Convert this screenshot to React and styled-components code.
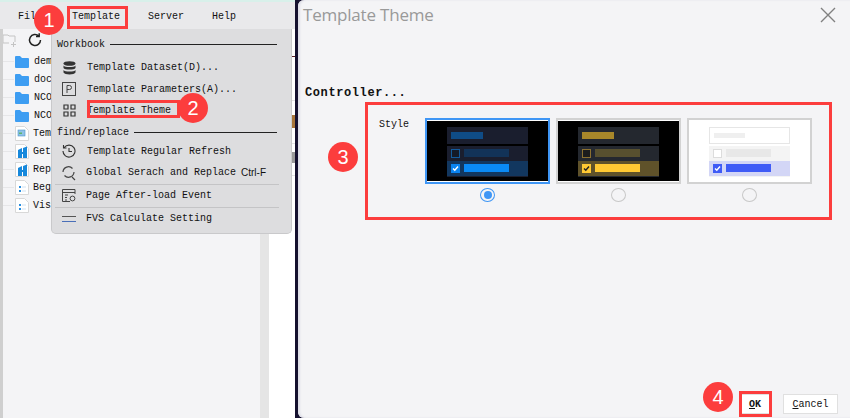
import React from 'react';
import styled, { createGlobalStyle } from 'styled-components';

const Global = createGlobalStyle`
	html, body {
		margin: 0;
		padding: 0;
		background: #f4f4f6;
	}
	#root {
		width: 850px;
		height: 418px;
	}
`;

const mono = `'Liberation Mono', 'DejaVu Sans Mono', monospace`;

const Page = styled.div`
	position: relative;
	display: flex;
	width: 850px;
	height: 418px;
	overflow: hidden;
	background: #14102e;
	font-family: ${mono};
	color: #111;
`;

const AppWindow = styled.div`
	position: relative;
	display: flex;
	flex-direction: column;
	width: 295px;
	flex: none;
	background: #f4f4f6;
	border-top: 2px solid #d8f0ea;
	box-sizing: border-box;
`;

const MenuBar = styled.div`
	display: flex;
	align-items: center;
	height: 27px;
	flex: none;
	padding: 2px 0 0 18px;
	box-sizing: border-box;
	background: #e9e9eb;
	font-size: 10px;
`;

const MenuLabel = styled.span`
	width: ${p => p.$w}px;
	flex: none;
`;

const AppBody = styled.div`
	display: flex;
	flex: 1;
	min-height: 0;
`;

const Tree = styled.div`
	width: 257px;
	margin-left: 3px;
	flex: none;
	background: #f4f4f6;
	box-shadow: -3px 0 0 #cfcfcf;
`;

const ToolRow = styled.div`
	display: flex;
	align-items: center;
	gap: 12px;
	height: 23px;
	padding-bottom: 1px;
	box-sizing: border-box;
`;

const TreeRow = styled.div`
	display: flex;
	align-items: center;
	gap: ${p => p.$gap || 5}px;
	height: 18px;
	padding-left: 12px;
	font-size: 10px;
	background: linear-gradient(#e6e6e8, #e6e6e8) no-repeat 0 50% / 11px 1px;
`;

const ScrollTrack = styled.div`
	width: 9px;
	flex: none;
	background: #e5e5e5;
`;

const WhitePane = styled.div`
	flex: 1;
	display: flex;
	flex-direction: column;
	align-items: flex-end;
	background: #fff;
`;

const PeekMark = styled.span`
	display: block;
	width: 4px;
	height: ${p => p.$h}px;
	margin-top: ${p => p.$mt}px;
	background: ${p => p.$bg};
`;

const Divider = styled.div`
	width: 3px;
	flex: none;
`;

const Dialog = styled.div`
	flex: 1;
	display: flex;
	flex-direction: column;
	background: #f4f4f6;
	border-radius: 6px 0 0 6px;
	box-shadow: inset 2px 0 2px #dddde6;
`;

const TitleBar = styled.div`
	display: flex;
	align-items: center;
	justify-content: space-between;
	height: 29px;
	flex: none;
	padding: 0 14px 0 5px;
`;

const Title = styled.h1`
	margin: 0;
	font: 400 17px 'Open Sans', sans-serif;
	letter-spacing: -0.2px;
	color: #999;
`;

const Heading = styled.div`
	margin: 56px 0 0 7px;
	font-size: 12px;
	font-weight: 700;
	letter-spacing: 0.6px;
	line-height: 16px;
`;

const StylePanel = styled.div`
	display: flex;
	margin: 2px 0 0 81px;
	height: 99px;
`;

const StyleLabel = styled.div`
	width: 46px;
	padding-top: 14px;
	font-size: 10px;
	line-height: 16px;
`;

const Options = styled.div`
	display: flex;
	gap: 6px;
	padding-top: 15px;
`;

const Option = styled.div`
	display: flex;
	flex-direction: column;
	align-items: center;
	gap: 2px;
	width: 125px;
`;

const Thumb = styled.div`
	display: flex;
	flex-direction: column;
	justify-content: center;
	align-items: center;
	width: 125px;
	height: 70px;
	padding-top: 2px;
	box-sizing: border-box;
	border: 2px solid ${p => p.$border};
	background: ${p => p.$bg};
	box-shadow: inset 0 1px 0 #fff, inset 0 -1px 0 #fff;
`;

const Radio = styled.span`
	display: flex;
	align-items: center;
	justify-content: center;
	width: 15px;
	height: 15px;
	margin-top: 2px;
	box-sizing: border-box;
	border-radius: 50%;
	border: 1px solid ${p => (p.$on ? '#3f96f5' : '#c8c8c8')};
	&::after {
		content: '';
		display: ${p => (p.$on ? 'block' : 'none')};
		width: 8px;
		height: 8px;
		border-radius: 50%;
		background: #3f96f5;
	}
`;

const MiniHead = styled.div`
	display: flex;
	align-items: center;
	box-sizing: border-box;
	width: 81px;
	height: 17px;
	padding-left: 4px;
	background: ${p => p.$bg};
	border: ${p => p.$line || 'none'};
`;

const MiniList = styled.div`
	width: 81px;
	margin-top: 2px;
	padding-bottom: 1px;
	background: ${p => p.$bg};
`;

const MiniRow = styled.div`
	display: flex;
	align-items: center;
	gap: 4px;
	height: 15px;
	padding-left: 4px;
	background: ${p => p.$bg || 'transparent'};
`;

const MiniBar = styled.span`
	display: block;
	width: ${p => p.$w}px;
	height: ${p => p.$h || 8}px;
	background: ${p => p.$bg};
`;

const MiniCheck = styled.span`
	display: flex;
	align-items: center;
	justify-content: center;
	box-sizing: border-box;
	width: 9px;
	height: 9px;
	background: ${p => p.$bg};
	border: 1px solid ${p => p.$border};
`;

const Footer = styled.div`
	display: flex;
	justify-content: flex-end;
	align-items: center;
	gap: 12px;
	margin-top: auto;
	padding: 0 12px 4px 0;
`;

const Button = styled.button`
	width: ${p => p.$w}px;
	height: 20px;
	padding: 0;
	box-sizing: border-box;
	background: #fff;
	border: 1px solid #e0e0e0;
	font: 10px ${mono};
	font-weight: ${p => (p.$bold ? 700 : 400)};
	color: #111;
	u {
		text-underline-offset: 1px;
	}
`;

const Menu = styled.div`
	position: absolute;
	left: 51px;
	top: 27px;
	width: 241px;
	height: 205px;
	box-sizing: border-box;
	padding-top: 8px;
	background: #dddddf;
	border: 1px solid #c9c9cb;
	border-top: 0;
	border-radius: 0 0 5px 5px;
	font-size: 10px;
	z-index: 2;
`;

const GroupTitle = styled.div`
	display: flex;
	align-items: center;
	gap: 5px;
	height: 14px;
	padding: 0 14px 0 5px;
	margin: ${p => p.$mt || 0}px 0 ${p => p.$mb || 0}px;
	&::after {
		content: '';
		flex: 1;
		height: 1px;
		background: #222;
	}
`;

const MenuItem = styled.div`
	display: flex;
	align-items: center;
	height: ${p => p.$h || 21.5}px;
	padding-left: 7px;
`;

const ItemIcon = styled.span`
	display: flex;
	justify-content: center;
	width: 20px;
	margin-right: ${p => p.$mr || 8}px;
	flex: none;
`;

const Shortcut = styled.span`
	margin-left: 5px;
	font: 10px 'Liberation Sans', sans-serif;
`;

const MenuRule = styled.div`
	height: 1px;
	margin: 0 12px 0 3px;
	background: #c4c4c6;
`;

const Outline = styled.div`
	position: absolute;
	left: ${p => p.$x}px;
	top: ${p => p.$y}px;
	width: ${p => p.$w}px;
	height: ${p => p.$h}px;
	box-sizing: border-box;
	border: 3px solid #fc3d3d;
	z-index: 3;
	pointer-events: none;
`;

const Badge = styled.div`
	position: absolute;
	left: ${p => p.$x - 15}px;
	top: ${p => p.$y - 15}px;
	display: flex;
	align-items: center;
	justify-content: center;
	width: 30px;
	height: 30px;
	border-radius: 50%;
	background: #fc3d3d;
	color: #fff;
	font: 400 20px 'Liberation Sans', sans-serif;
	z-index: 4;
`;

const Folder = () => (
	<svg width="14" height="13" viewBox="0 0 14 13">
		<path d="M0 2a1 1 0 0 1 1-1h4l2 2h6a1 1 0 0 1 1 1v8a1 1 0 0 1-1 1H1a1 1 0 0 1-1-1z" fill="#3d9df2" />
	</svg>
);

const DocIcon = ({ kind }) => (
	<svg width="14" height="15" viewBox="0 0 14 15">
		<path d="M.5.5h9l4 4v10H.5z" fill="#fff" stroke="#d8d8d8" />
		{kind === 'sheet' && <rect x="3" y="4" width="7" height="6" fill="#8fc2e6" stroke="#4b94c9" strokeWidth=".6" />}
		{kind === 'sheet' && <rect x="4" y="6.5" width="3" height="1.5" fill="#5cb56a" />}
		{kind === 'brand' && <path d="M3 14V6l4-2v4h1V4l4-1.5V14H8v-4H7v4z" fill="#1688dc" />}
		{kind === 'list' && <path d="M4 6h2v2H4zM4 10h2v2H4z" fill="#2a8fe0" />}
		{kind === 'list' && <path d="M7 7h4M7 11h4" stroke="#cfe2f3" />}
	</svg>
);

const Thumbnail = ({ t }) => (
	<Thumb $border={t.border} $bg={t.bg}>
		<MiniHead $bg={t.head} $line={t.headLine}>
			<MiniBar $w={t.headBar} $h={t.headH} $bg={t.headFill} />
		</MiniHead>
		<MiniList $bg={t.list}>
			<MiniRow>
				<MiniCheck $bg={t.boxBg} $border={t.boxLine} />
				<MiniBar $w={45} $bg={t.dim} />
			</MiniRow>
			<MiniRow $bg={t.sel}>
				<MiniCheck $bg={t.check} $border={t.check}>
					<svg width="7" height="7" viewBox="0 0 7 7">
						<path d="M1 3.5l1.8 1.8L6 1.5" fill="none" stroke={t.tick} strokeWidth="1.4" />
					</svg>
				</MiniCheck>
				<MiniBar $w={45} $bg={t.accent} />
			</MiniRow>
		</MiniList>
	</Thumb>
);

const themes = [
	{ border: '#3f96f5', bg: '#000', head: '#1a1e2e', headFill: '#0f4c86', headBar: 32, headH: 7, list: '#1a1e2e', boxBg: '#141a28', boxLine: '#135a9c', dim: '#123358', sel: '#12375f', check: '#0a84f0', tick: '#fff', accent: '#0a8af5' },
	{ border: '#d2d2d2', bg: '#000', head: '#24282f', headFill: '#a8872a', headBar: 32, headH: 7, list: '#24282f', boxBg: '#1c1c1c', boxLine: '#8b7030', dim: '#57502f', sel: '#5f522a', check: '#ffc933', tick: '#222', accent: '#ffc933' },
	{ border: '#d2d2d2', bg: '#fff', head: '#fff', headLine: '1px solid #e6e6e6', headFill: '#efefef', headBar: 31, headH: 5, list: '#f4f4f4', boxBg: '#fff', boxLine: '#dcdcdc', dim: '#e8e8e8', sel: '#d3d6f6', check: '#3f5bf6', tick: '#fff', accent: '#3f5bf6' },
];

const treeRows = [
	['demo', 'folder'], ['docs', 'folder'], ['NCO', 'folder'], ['NCO', 'folder'],
	['Temp', 'sheet'], ['Get', 'brand'], ['Rep', 'brand'], ['Beg', 'list'], ['Vis', 'list'],
];

const App = () => (
	<Page>
		<Global />
		<AppWindow>
			<MenuBar>
				<MenuLabel $w={54}>File</MenuLabel>
				<MenuLabel $w={76}>Template</MenuLabel>
				<MenuLabel $w={64}>Server</MenuLabel>
				<MenuLabel $w={40}>Help</MenuLabel>
			</MenuBar>
			<AppBody>
				<Tree>
					<ToolRow>
						<svg width="13" height="14" viewBox="0 0 13 14">
							<path d="M0 2h5l1 1h6v6M0 2v8h6M8 11.5h5M10.5 9v5" fill="none" stroke="#c4c4c4" />
						</svg>
						<svg width="14" height="14" viewBox="0 0 14 14">
							<path d="M12.5 7a5.5 5.5 0 1 1-1.7-4M11.2.3v3.2H8" fill="none" stroke="#222" strokeWidth="1.5" />
						</svg>
					</ToolRow>
					{treeRows.map(([name, kind], i) => (
						<TreeRow key={i} $gap={kind === 'folder' ? 5 : 4}>
							{kind === 'folder' ? <Folder /> : <DocIcon kind={kind} />}
							{name}
						</TreeRow>
					))}
				</Tree>
				<ScrollTrack />
				<WhitePane>
					<PeekMark $mt={27} $h={1} $bg="#5a1f24" />
					<PeekMark $mt={43} $h={1} $bg="#e4e4e4" />
					<PeekMark $mt={14} $h={13} $bg="#a8763a" />
					<PeekMark $mt={15} $h={1} $bg="#e4e4e4" />
					<PeekMark $mt={8} $h={11} $bg="#9a9a9a" />
					<PeekMark $mt={12} $h={1} $bg="#e4e4e4" />
				</WhitePane>
			</AppBody>
			<Menu>
				<GroupTitle $mb={6}>Workbook</GroupTitle>
				<MenuItem>
					<ItemIcon>
						<svg width="13" height="14" viewBox="0 0 13 14">
							<ellipse cx="6.5" cy="2.5" rx="6" ry="2.3" fill="#333" />
							<path d="M.5 4.5c1 2 11 2 12 0v2.5c-1 2-11 2-12 0zM.5 9c1 2 11 2 12 0v2.5c-1 2.5-11 2.5-12 0z" fill="#333" />
						</svg>
					</ItemIcon>
					Template Dataset(D)...
				</MenuItem>
				<MenuItem>
					<ItemIcon>
						<svg width="14" height="14" viewBox="0 0 14 14">
							<rect x=".5" y=".5" width="13" height="13" fill="none" stroke="#444" />
							<path d="M5 11V3.5h2.5a2 2 0 0 1 0 4H5" fill="none" stroke="#444" />
						</svg>
					</ItemIcon>
					Template Parameters(A)...
				</MenuItem>
				<MenuItem>
					<ItemIcon>
						<svg width="13" height="13" viewBox="0 0 13 13">
							<path d="M1 1h4v4H1zM8 1h4v4H8zM1 8h4v4H1zM8 8h4v4H8z" fill="none" stroke="#333" strokeWidth="1.2" />
						</svg>
					</ItemIcon>
					Template Theme
				</MenuItem>
				<GroupTitle $mt={4} $mb={1}>find/replace</GroupTitle>
				<MenuItem>
					<ItemIcon>
						<svg width="14" height="14" viewBox="0 0 14 14">
							<path d="M2.2 3.5A6 6 0 1 1 1 7M7 4v3.5h3M1.5 1v3h3" fill="none" stroke="#333" strokeWidth="1.1" />
						</svg>
					</ItemIcon>
					Template Regular Refresh
				</MenuItem>
				<MenuItem $h={21.5}>
					<ItemIcon $mr={7}>
						<svg width="16" height="16" viewBox="0 0 16 16">
							<path d="M2 7a5.5 5.5 0 0 1 9.5-3.5M13 7a5.5 5.5 0 0 1-9.5 3.5M11 12l3 3" fill="none" stroke="#444" strokeWidth="1.2" />
						</svg>
					</ItemIcon>
					Global Serach and Replace
					<Shortcut>Ctrl-F</Shortcut>
				</MenuItem>
				<MenuRule />
				<MenuItem $h={22}>
					<ItemIcon $mr={7}>
						<svg width="14" height="13" viewBox="0 0 14 13">
							<path d="M13 5V.5H.5v12H8M.5 3.5H13M3 6h3M3 8.5h2M3 11h2" fill="none" stroke="#444" />
							<circle cx="10.5" cy="9.5" r="2.4" fill="none" stroke="#444" />
						</svg>
					</ItemIcon>
					Page After-load Event
				</MenuItem>
				<MenuRule />
				<MenuItem $h={22}>
					<ItemIcon $mr={7}>
						<svg width="14" height="6" viewBox="0 0 14 6">
							<path d="M0 .5h14" stroke="#555" />
							<path d="M0 5.5h14" stroke="#4a6fb8" />
						</svg>
					</ItemIcon>
					FVS Calculate Setting
				</MenuItem>
			</Menu>
		</AppWindow>
		<Divider />
		<Dialog>
			<TitleBar>
				<Title>Template Theme</Title>
				<svg width="16" height="16" viewBox="0 0 16 16">
					<path d="M1 1l14 14M15 1L1 15" stroke="#808080" strokeWidth="1.4" />
				</svg>
			</TitleBar>
			<Heading>Controller...</Heading>
			<StylePanel>
				<StyleLabel>Style</StyleLabel>
				<Options>
					{themes.map((t, i) => (
						<Option key={i}>
							<Thumbnail t={t} />
							<Radio $on={i === 0} />
						</Option>
					))}
				</Options>
			</StylePanel>
			<Footer>
				<Button $w={32} $bold><u>O</u>K</Button>
				<Button $w={55}><u>C</u>ancel</Button>
			</Footer>
		</Dialog>
		<Outline $x={67} $y={6} $w={61} $h={23} />
		<Outline $x={87} $y={100} $w={93} $h={18} />
		<Outline $x={365} $y={102} $w={467} $h={118} />
		<Outline $x={739} $y={391} $w={33} $h={26} />
		<Badge $x={49} $y={20}>1</Badge>
		<Badge $x={193} $y={108}>2</Badge>
		<Badge $x={343} $y={157}>3</Badge>
		<Badge $x={718} $y={397}>4</Badge>
	</Page>
);

export default App;
